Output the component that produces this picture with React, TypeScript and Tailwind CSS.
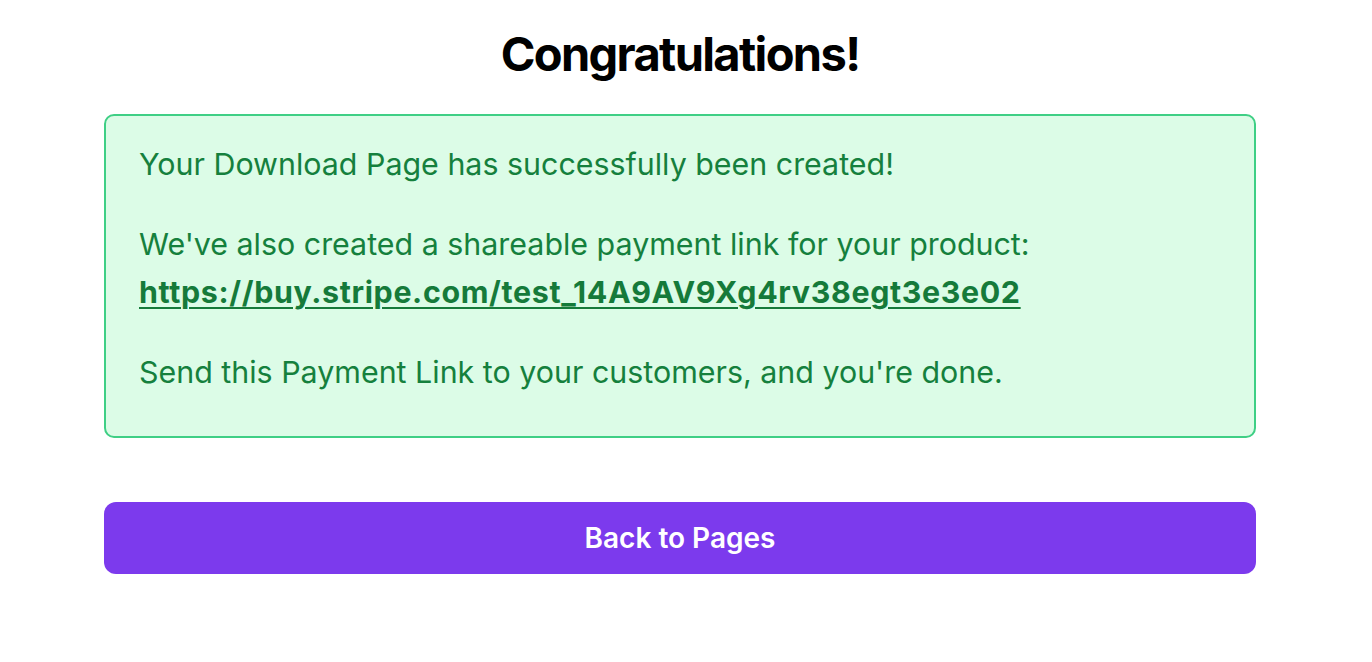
export default function App() {
  return (
    <div className="min-h-screen w-[1360px] bg-white font-['Inter',sans-serif]">
      <div className="mx-auto w-[1152px] pt-[22px]">
        <h1 className="text-center text-[47px] leading-[64px] font-bold tracking-[-0.035em] text-black">
          Congratulations!
        </h1>

        <div className="mt-[28px] rounded-[10px] border-2 border-[#3fcf85] bg-[#dcfce7] px-[33px] pt-[24px] pb-[40px] text-[#15803d] text-[30.4px] leading-[48px]">
          <p>Your Download Page has successfully been created!</p>
          <p className="mt-[32px]">
            We've also created a shareable payment link for your product:{' '}
            <a
              href="#"
              className="font-bold tracking-[0.021em] text-[#157a3a] underline decoration-2 underline-offset-[4px]"
            >
              https://buy.stripe.com/test_14A9AV9Xg4rv38egt3e3e02
            </a>
          </p>
          <p className="mt-[32px]">Send this Payment Link to your customers, and you're done.</p>
        </div>

        <button className="mt-[64px] flex h-[72px] w-full items-center justify-center rounded-[12px] bg-[#7c3aed] text-[28px] font-semibold text-white">
          Back to Pages
        </button>
      </div>
    </div>
  )
}
